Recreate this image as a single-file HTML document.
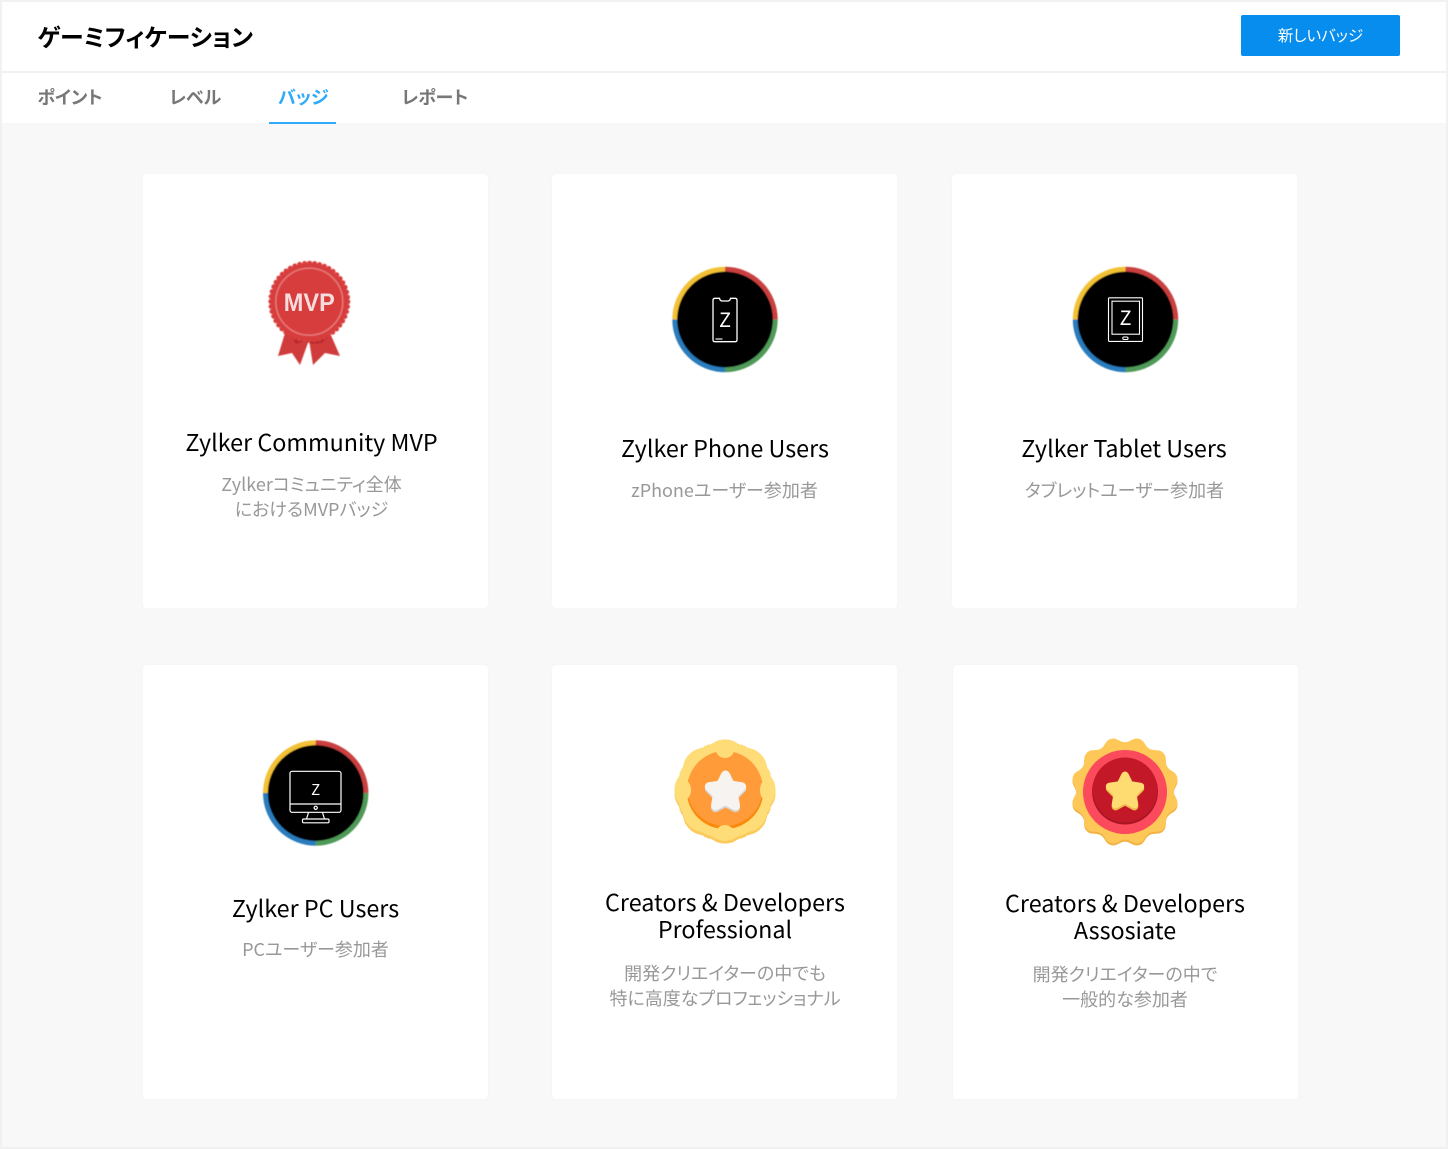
<!DOCTYPE html>
<html lang="ja"><head><meta charset="utf-8"><title>ゲーミフィケーション</title>
<style>
html,body{margin:0;padding:0}
body{width:1448px;height:1149px;background:#f8f8f8;position:relative;overflow:hidden;font-family:"Noto Sans CJK JP","Liberation Sans",sans-serif;font-feature-settings:"palt"}
.a{position:absolute}
.frame{left:0;top:0;width:1448px;height:1149px;box-sizing:border-box;border:2px solid #f1f1f1;pointer-events:none}
.head{left:2px;top:2px;width:1444px;height:69px;background:#fff}
.tabs{left:2px;top:73px;width:1444px;height:50px;background:#fff}
.line{left:2px;top:71px;width:1444px;height:2px;background:#f0f0f0}
.h1{left:37.500px;top:19px;font-size:23.900px;line-height:34px;font-weight:700;color:#000;white-space:nowrap}
.tab{top:84px;font-size:18px;line-height:26px;font-weight:700;color:#777;white-space:nowrap}
.btn{left:1241px;top:15px;width:159px;height:41px;background:#068ded;border-radius:2px;color:#fff;font-size:15.500px;line-height:40px;text-align:center}
.card{background:#fff;border-radius:4px;width:345px;height:434px;box-shadow:0 0 3px rgba(0,0,0,.025)}
.t{width:345px;text-align:center;font-size:23.33px;line-height:27px;color:#000;white-space:nowrap}
.s{width:345px;text-align:center;font-size:18px;line-height:25px;color:#989898;white-space:nowrap}
svg{position:absolute;left:0;top:0}
</style></head><body>
<div class="a head"></div><div class="a line"></div><div class="a tabs"></div>
<div class="a h1">ゲーミフィケーション</div>
<div class="a btn">新しいバッジ</div>
<div class="a tab" style="left:37.300px">ポイント</div>
<div class="a tab" style="left:169.300px">レベル</div>
<div class="a tab" style="left:278px;color:#2eaaf8">バッジ</div>
<div class="a tab" style="left:401.500px">レポート</div>
<div class="a" style="left:269px;top:122px;width:67px;height:2px;background:#2eaaf8"></div>

<div class="a card" style="left:143px;top:174px"></div>
<div class="a card" style="left:552px;top:174px"></div>
<div class="a card" style="left:952px;top:174px"></div>
<div class="a card" style="left:143px;top:665px"></div>
<div class="a card" style="left:552px;top:665px"></div>
<div class="a card" style="left:953px;top:665px"></div>

<svg width="1448" height="1149" viewBox="0 0 1448 1149" fill="none">
<defs>
<filter id="soft" x="-10%" y="-10%" width="120%" height="120%"><feGaussianBlur stdDeviation=".45"/></filter>
<g id="ring" stroke-width="4.800">
<circle r="49.500" fill="#000"/>
<path d="M-50.300 0A50.300 50.300 0 0 1 0-50.300" stroke="#f3c136"/>
<path d="M0-50.300A50.300 50.300 0 0 1 50.300 0" stroke="#c9403f"/>
<path d="M50.300 0A50.300 50.300 0 0 1 0 50.300" stroke="#4f9a58"/>
<path d="M0 50.300A50.300 50.300 0 0 1-50.300 0" stroke="#2a7cbc"/>
</g>
<path id="lobeA" d="M-21-44C-11-45-11-50.500 0-50.500C11-50.500 11-45 21-44L0 0Z"/>
<path id="lobeB" d="M-15-46.500C-7-47.500-7-54 0-54C7-54 7-47.500 15-46.500L0 0Z"/>
</defs>

<!-- MVP seal -->
<g filter="url(#soft)">
<path d="M285 333L278 356L292 353L300 365L309 340L313 365L325 353L340 356L330 333Z" fill="#d03a3a"/>
<path d="M291 336L296 344L305 341L312 344L322 343L329 336Z" fill="#b82a2d"/>
<circle cx="309.300" cy="301.700" r="38" fill="#d83c3c"/>
<circle cx="309.300" cy="301.700" r="38.500" stroke="#d83c3c" stroke-width="5" stroke-linecap="round" stroke-dasharray="0 5.040"/>
<circle cx="309.300" cy="301.700" r="33.500" stroke="#e67c7c" stroke-width="1.400"/>
</g>
<text x="309.300" y="311" text-anchor="middle" font-family="'Liberation Sans',sans-serif" font-size="25" font-weight="700" fill="#f6dcdc" textLength="51" lengthAdjust="spacingAndGlyphs">MVP</text>

<!-- Phone -->
<use href="#ring" transform="translate(725 319.500)" filter="url(#soft)"/>
<g stroke="#fff" stroke-width="1.300">
<path d="M715 298.300H719.500Q720 301 722 301H728Q730 301 730.500 298.300H735Q737 298.300 737 300.300V339.700Q737 341.700 735 341.700H715Q713 341.700 713 339.700V300.300Q713 298.300 715 298.300Z"/>
<path d="M715.500 339H722.500" stroke-width="1.100"/>
</g>
<text x="725" y="327" text-anchor="middle" font-family="'Noto Sans CJK JP',sans-serif" font-size="20" fill="#fff">Z</text>

<!-- Tablet -->
<use href="#ring" transform="translate(1125.500 319.500)" filter="url(#soft)"/>
<g stroke="#fff" stroke-width="1.100">
<rect x="1108.500" y="297.800" width="34" height="43.600" rx="1"/>
<rect x="1112" y="301.200" width="27.500" height="33"/>
<rect x="1122.800" y="337" width="5.200" height="2.500" rx="1.200"/>
</g>
<text x="1125.500" y="325" text-anchor="middle" font-family="'Noto Sans CJK JP',sans-serif" font-size="20" fill="#fff">Z</text>

<!-- PC -->
<use href="#ring" transform="translate(315.700 793)" filter="url(#soft)"/>
<g stroke="#fff" stroke-width="1.200">
<rect x="290" y="771.300" width="51" height="41" rx="2"/>
<path d="M290 804H341"/>
<circle cx="315.700" cy="807.800" r="1.600"/>
<path d="M308.500 812.500L306.500 819M322.500 812.500L324.500 819"/>
<rect x="302.500" y="819" width="26.500" height="3.800" rx="1.200"/>
</g>
<text x="315.700" y="795" text-anchor="middle" font-family="'Noto Sans CJK JP',sans-serif" font-size="15" fill="#fff">Z</text>

<!-- Orange badge -->
<g transform="translate(725 793)" fill="#fcc95b">
<circle r="47"/>
<use href="#lobeA"/><use href="#lobeA" transform="rotate(45)"/><use href="#lobeA" transform="rotate(90)"/><use href="#lobeA" transform="rotate(135)"/><use href="#lobeA" transform="rotate(180)"/><use href="#lobeA" transform="rotate(225)"/><use href="#lobeA" transform="rotate(270)"/><use href="#lobeA" transform="rotate(315)"/>
</g>
<g transform="translate(725 790)" fill="#fedc78">
<circle r="47"/>
<use href="#lobeA"/><use href="#lobeA" transform="rotate(45)"/><use href="#lobeA" transform="rotate(90)"/><use href="#lobeA" transform="rotate(135)"/><use href="#lobeA" transform="rotate(180)"/><use href="#lobeA" transform="rotate(225)"/><use href="#lobeA" transform="rotate(270)"/><use href="#lobeA" transform="rotate(315)"/>
</g>
<circle cx="725" cy="790.700" r="38.300" fill="#fb8a0c"/>
<circle cx="725" cy="788.500" r="37.500" fill="#ff9b38"/>
<ellipse cx="725" cy="750" rx="9" ry="8" fill="#fedc78"/>
<ellipse cx="725" cy="833" rx="9" ry="8" fill="#fedc78"/>
<ellipse cx="684" cy="790" rx="7" ry="10" fill="#fedc78"/>
<ellipse cx="766" cy="790" rx="6" ry="10" fill="#fedc78"/>
<polygon transform="translate(725.500 794)" points="0,-17 5,-6.900 16.200,-5.300 8.100,2.600 10,13.800 0,8.500 -10,13.800 -8.100,2.600 -16.200,-5.300 -5,-6.900" fill="#d8d3d1" stroke="#d8d3d1" stroke-width="9" stroke-linejoin="round"/>
<polygon transform="translate(725.500 792)" points="0,-17 5,-6.900 16.200,-5.300 8.100,2.600 10,13.800 0,8.500 -10,13.800 -8.100,2.600 -16.200,-5.300 -5,-6.900" fill="#f7f3f0" stroke="#f7f3f0" stroke-width="9" stroke-linejoin="round"/>

<!-- Red badge -->
<g transform="translate(1125 793) rotate(15)" fill="#f1b344">
<circle r="47.500"/>
<use href="#lobeB"/><use href="#lobeB" transform="rotate(30)"/><use href="#lobeB" transform="rotate(60)"/><use href="#lobeB" transform="rotate(90)"/><use href="#lobeB" transform="rotate(120)"/><use href="#lobeB" transform="rotate(150)"/><use href="#lobeB" transform="rotate(180)"/><use href="#lobeB" transform="rotate(210)"/><use href="#lobeB" transform="rotate(240)"/><use href="#lobeB" transform="rotate(270)"/><use href="#lobeB" transform="rotate(300)"/><use href="#lobeB" transform="rotate(330)"/>
</g>
<g transform="translate(1125 791) rotate(15)" fill="#fdc858">
<circle r="47.500"/>
<use href="#lobeB"/><use href="#lobeB" transform="rotate(30)"/><use href="#lobeB" transform="rotate(60)"/><use href="#lobeB" transform="rotate(90)"/><use href="#lobeB" transform="rotate(120)"/><use href="#lobeB" transform="rotate(150)"/><use href="#lobeB" transform="rotate(180)"/><use href="#lobeB" transform="rotate(210)"/><use href="#lobeB" transform="rotate(240)"/><use href="#lobeB" transform="rotate(270)"/><use href="#lobeB" transform="rotate(300)"/><use href="#lobeB" transform="rotate(330)"/>
</g>
<circle cx="1125" cy="792" r="42" fill="#fb4a5c"/>
<circle cx="1125" cy="791.500" r="33" fill="#a81525"/>
<circle cx="1125" cy="790" r="32.500" fill="#c21827"/>
<polygon transform="translate(1125 793.500) scale(.95)" points="0,-17 5,-6.900 16.200,-5.300 8.100,2.600 10,13.800 0,8.500 -10,13.800 -8.100,2.600 -16.200,-5.300 -5,-6.900" fill="#f0b84a" stroke="#f0b84a" stroke-width="8" stroke-linejoin="round"/>
<polygon transform="translate(1125 791.500) scale(.95)" points="0,-17 5,-6.900 16.200,-5.300 8.100,2.600 10,13.800 0,8.500 -10,13.800 -8.100,2.600 -16.200,-5.300 -5,-6.900" fill="#fedc72" stroke="#fedc72" stroke-width="8" stroke-linejoin="round"/>
</svg>

<div class="a t" style="left:139px;top:428px">Zylker Community MVP</div>
<div class="a s" style="left:139px;top:472px">Zylkerコミュニティ全体<br>におけるMVPバッジ</div>

<div class="a t" style="left:552.500px;top:434px">Zylker Phone Users</div>
<div class="a s" style="left:552px;top:478px">zPhoneユーザー参加者</div>

<div class="a t" style="left:951.500px;top:434px">Zylker Tablet Users</div>
<div class="a s" style="left:952px;top:478px">タブレットユーザー参加者</div>

<div class="a t" style="left:143px;top:894px">Zylker PC Users</div>
<div class="a s" style="left:143px;top:937px">PCユーザー参加者</div>

<div class="a t" style="left:552.500px;top:888px">Creators &amp; Developers<br>Professional</div>
<div class="a s" style="left:552.500px;top:961px">開発クリエイターの中でも<br>特に高度なプロフェッショナル</div>

<div class="a t" style="left:952.500px;top:889px">Creators &amp; Developers<br>Assosiate</div>
<div class="a s" style="left:952.500px;top:962px">開発クリエイターの中で<br>一般的な参加者</div>

<div class="a frame"></div>
</body></html>
